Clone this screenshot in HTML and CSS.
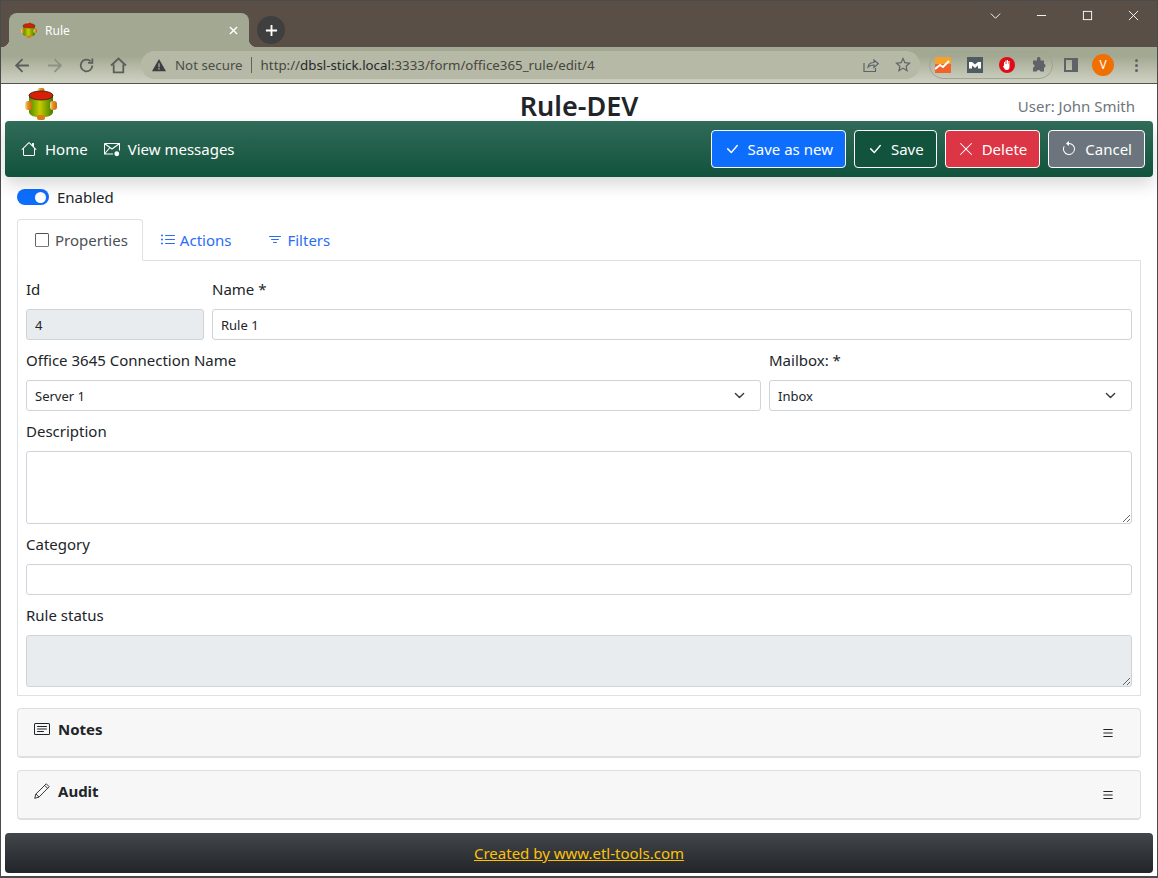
FILE: index.html
```html
<!DOCTYPE html>
<html>
<head>
  <title>Rule</title>
  <link rel="stylesheet" href="styles.css">
</head>
<body>
<svg class="defs" width="0" height="0">
  <defs>
    <linearGradient id="g-body" x1="0" x2="1" y1="0" y2="0">
      <stop offset="0" stop-color="#4f8a00"/>
      <stop offset=".45" stop-color="#c4cc00"/>
      <stop offset="1" stop-color="#3f7a00"/>
    </linearGradient>
    <linearGradient id="g-knob" x1="0" x2="1" y1="0" y2="0">
      <stop offset="0" stop-color="#f3dfa0"/>
      <stop offset=".45" stop-color="#e58a1c"/>
      <stop offset="1" stop-color="#c96a10"/>
    </linearGradient>
  </defs>
  <symbol id="i-house" viewBox="0 0 16 16"><path d="M8.707 1.5a1 1 0 0 0-1.414 0L.646 8.146a.5.5 0 0 0 .708.708L2 8.207V13.5A1.5 1.5 0 0 0 3.5 15h9a1.5 1.5 0 0 0 1.5-1.5V8.207l.646.647a.5.5 0 0 0 .708-.708L13 5.793V2.5a.5.5 0 0 0-.5-.5h-1a.5.5 0 0 0-.5.5v1.293L8.707 1.5ZM13 7.207V13.5a.5.5 0 0 1-.5.5h-9a.5.5 0 0 1-.5-.5V7.207l5-5 5 5Z"/></symbol>
  <symbol id="i-check" viewBox="0 0 16 16"><path d="M12.736 3.97a.733.733 0 0 1 1.047 0c.286.289.29.756.01 1.05L7.88 12.01a.733.733 0 0 1-1.065.02L3.217 8.384a.757.757 0 0 1 0-1.06.733.733 0 0 1 1.047 0l3.052 3.093 5.4-6.425a.247.247 0 0 1 .02-.022Z"/></symbol>
  <symbol id="i-x" viewBox="0 0 16 16"><path d="M2.146 2.854a.5.5 0 1 1 .708-.708L8 7.293l5.146-5.147a.5.5 0 0 1 .708.708L8.707 8l5.147 5.146a.5.5 0 0 1-.708.708L8 8.707l-5.146 5.147a.5.5 0 0 1-.708-.708L7.293 8 2.146 2.854Z"/></symbol>
  <symbol id="i-undo" viewBox="0 0 16 16"><path d="M8 3a5 5 0 1 1-4.546 2.914.5.5 0 0 0-.908-.417A6 6 0 1 0 8 2v1z"/><path d="M8 4.466V.534a.25.25 0 0 0-.41-.192L5.23 2.308a.25.25 0 0 0 0 .384l2.36 1.966A.25.25 0 0 0 8 4.466z"/></symbol>
  <symbol id="i-list-ul" viewBox="0 0 16 16"><path d="M5 11.5a.5.5 0 0 1 .5-.5h9a.5.5 0 0 1 0 1h-9a.5.5 0 0 1-.5-.5zm0-4a.5.5 0 0 1 .5-.5h9a.5.5 0 0 1 0 1h-9a.5.5 0 0 1-.5-.5zm0-4a.5.5 0 0 1 .5-.5h9a.5.5 0 0 1 0 1h-9a.5.5 0 0 1-.5-.5zm-3 1a1 1 0 1 0 0-2 1 1 0 0 0 0 2zm0 4a1 1 0 1 0 0-2 1 1 0 0 0 0 2zm0 4a1 1 0 1 0 0-2 1 1 0 0 0 0 2z"/></symbol>
  <symbol id="i-filter" viewBox="0 0 16 16"><path d="M6 10.5a.5.5 0 0 1 .5-.5h3a.5.5 0 0 1 0 1h-3a.5.5 0 0 1-.5-.5zm-2-3a.5.5 0 0 1 .5-.5h7a.5.5 0 0 1 0 1h-7a.5.5 0 0 1-.5-.5zm-2-3a.5.5 0 0 1 .5-.5h11a.5.5 0 0 1 0 1h-11a.5.5 0 0 1-.5-.5z"/></symbol>
  <symbol id="i-square" viewBox="0 0 16 16"><path d="M14 1a1 1 0 0 1 1 1v12a1 1 0 0 1-1 1H2a1 1 0 0 1-1-1V2a1 1 0 0 1 1-1h12zM2 0a2 2 0 0 0-2 2v12a2 2 0 0 0 2 2h12a2 2 0 0 0 2-2V2a2 2 0 0 0-2-2H2z"/></symbol>
  <symbol id="i-card" viewBox="0 0 16 16"><path d="M14.5 3a.5.5 0 0 1 .5.5v9a.5.5 0 0 1-.5.5h-13a.5.5 0 0 1-.5-.5v-9a.5.5 0 0 1 .5-.5h13zm-13-1A1.5 1.5 0 0 0 0 3.5v9A1.5 1.5 0 0 0 1.5 14h13a1.5 1.5 0 0 0 1.5-1.5v-9A1.5 1.5 0 0 0 14.5 2h-13z"/><path d="M3 5.5a.5.5 0 0 1 .5-.5h9a.5.5 0 0 1 0 1h-9a.5.5 0 0 1-.5-.5zM3 8a.5.5 0 0 1 .5-.5h9a.5.5 0 0 1 0 1h-9A.5.5 0 0 1 3 8zm0 2.5a.5.5 0 0 1 .5-.5h6a.5.5 0 0 1 0 1h-6a.5.5 0 0 1-.5-.5z"/></symbol>
  <symbol id="i-menu" viewBox="0 0 16 16"><path d="M2.5 12a.5.5 0 0 1 .5-.5h10a.5.5 0 0 1 0 1H3a.5.5 0 0 1-.5-.5zm0-4a.5.5 0 0 1 .5-.5h10a.5.5 0 0 1 0 1H3a.5.5 0 0 1-.5-.5zm0-4a.5.5 0 0 1 .5-.5h10a.5.5 0 0 1 0 1H3a.5.5 0 0 1-.5-.5z"/></symbol>
  <symbol id="i-logo" viewBox="0 0 32 32">
    <rect x="12.500" y="0" width="7" height="6" rx="2" fill="url(#g-knob)"/>
    <path d="M4 7v17c0 3 5 5.500 12 5.500S28 27 28 24V7z" fill="url(#g-body)"/>
    <ellipse cx="16" cy="7.500" rx="12" ry="4.500" fill="#d81e05" stroke="#222" stroke-width=".8"/>
    <rect x="0" y="13" width="7" height="9" rx="3" fill="url(#g-knob)"/>
    <rect x="25" y="13" width="7" height="9" rx="3" fill="url(#g-knob)"/>
    <rect x="12" y="27" width="8" height="5" rx="2" fill="#e0791e"/>
  </symbol>
</svg>

<div class="browser">
  <div class="tabstrip">
    <div class="tab">
      <svg class="favicon"><use href="#i-logo"/></svg>
      <span class="tab-title">Rule</span>
      <svg class="tab-close" viewBox="0 0 10 10"><path d="M1 1l8 8M9 1l-8 8"/></svg>
    </div>
    <div class="newtab"><svg viewBox="0 0 14 14"><path d="M7 1v12M1 7h12"/></svg></div>
    <div class="winctl">
      <svg viewBox="0 0 12 12"><path d="M1 4l5 5 5-5"/></svg>
      <svg viewBox="0 0 12 12"><path d="M1 6h10"/></svg>
      <svg viewBox="0 0 12 12"><rect x="1.5" y="1.5" width="9" height="9"/></svg>
      <svg viewBox="0 0 12 12"><path d="M1 1l10 10M11 1l-10 10"/></svg>
    </div>
  </div>
  <div class="toolbar">
    <svg class="tool" viewBox="0 0 16 16"><path d="M14 8H2.5M8 2L2 8l6 6"/></svg>
    <svg class="tool tool-off" viewBox="0 0 16 16"><path d="M2 8h11.5M8 2l6 6-6 6"/></svg>
    <svg class="tool" viewBox="0 0 16 16"><path d="M13.5 8A5.5 5.5 0 1 1 11.8 4M13.5 1.5V5.5H9.5"/></svg>
    <svg class="tool" viewBox="0 0 16 16"><path d="M1 8l7-6.5L15 8M3.5 7v7.5h9V7"/></svg>
    <div class="omnibox">
      <svg class="warn" viewBox="0 0 16 16"><path d="M8 1l8 14H0z" fill="#3c4043"/><path d="M7.3 6h1.4v4.5H7.3zM7.3 11.5h1.4V13H7.3z" fill="#b5b9a6"/></svg>
      <span class="not-secure">Not secure</span>
      <span class="url">http://<b>dbsl-stick.local</b>:3333/form/office365_rule/edit/4</span>
      <svg class="omni-icon" viewBox="0 0 16 16"><path d="M1 6v8.5h11.5V11M5 10c.5-3 3-4.500 6-4.500V3l4.200 3.700-4.200 3.700V8C8.500 8 6.500 8.500 5 10z"/></svg>
      <svg class="omni-icon" viewBox="0 0 16 16"><path d="M8 1.500l1.900 4.200 4.600.5-3.400 3.100.9 4.500L8 11.100l-4 2.700.9-4.500L1.500 6.200l4.600-.5z"/></svg>
    </div>
    <div class="extensions">
      <svg class="ext" viewBox="0 0 16 16"><rect width="16" height="16" fill="#f0632a"/><rect width="16" height="7" fill="#f7a12a"/><path d="M0 12l5-4 3 2 6-6" fill="none" stroke="#fff" stroke-width="2"/></svg>
      <svg class="ext" viewBox="0 0 16 16"><rect width="16" height="16" fill="#4f5b60"/><path d="M2 11.500V5h3L8 7.500 11 5h3v6.500h-3V8.500L8 11 5 8.500v3z" fill="#fff"/></svg>
      <svg class="ext" viewBox="0 0 16 16"><circle cx="8" cy="8" r="8" fill="#e00b16"/><path d="M5 8V5h1v2h.4V3.500h1.100V7h.4V3h1.100v4h.4V4h1.100v6c0 2-1 3-2.800 3S5.500 12 4 9.500l.6-.5z" fill="#fff"/></svg>
      <svg class="ext" viewBox="0 0 16 16"><path fill="#5f6368" d="M6 1.500a1.800 1.800 0 0 1 3.500 0V3.500H13v3.300a2 2 0 0 1 0 3.900V14.500H9.500a2 2 0 0 0-3.800 0H2V10.800a2 2 0 0 0 0-3.900V3.500h4z"/></svg>
    </div>
    <svg class="sidepanel" viewBox="0 0 14 14"><path fill-rule="evenodd" fill="#5f6368" d="M0 0h14v14H0zM2 2v10h6V2z"/></svg>
    <div class="avatar">V</div>
    <div class="kebab"><i></i><i></i><i></i></div>
  </div>

  <div class="page">
    <header class="top">
      <div class="top-side"><svg class="logo"><use href="#i-logo"/></svg></div>
      <div class="app-title">Rule-DEV</div>
      <div class="top-side user">User: John Smith</div>
    </header>

    <nav class="navbar">
      <a class="nav-link"><svg class="ico"><use href="#i-house"/></svg>Home</a>
      <a class="nav-link">
        <svg class="ico-mail" viewBox="0 0 16 16"><path d="M.5 2.500h15v7M.5 2.500v10.500h8.500M.5 2.500l7.500 5.500 7.500-5.500M.5 13l5-6"/><circle class="mail-dot" cx="12.800" cy="12.800" r="3"/></svg>View messages</a>
      <div class="nav-actions">
        <button class="btn btn-blue"><svg class="ico"><use href="#i-check"/></svg>Save as new</button>
        <button class="btn btn-green"><svg class="ico"><use href="#i-check"/></svg>Save</button>
        <button class="btn btn-red"><svg class="ico"><use href="#i-x"/></svg>Delete</button>
        <button class="btn btn-grey"><svg class="ico"><use href="#i-undo"/></svg>Cancel</button>
      </div>
    </nav>

    <main class="content">
      <div class="switch-row"><span class="switch"><span class="knob"></span></span>Enabled</div>

      <div class="tabs">
        <a class="tab-link active"><svg class="ico-sm"><use href="#i-square"/></svg>Properties</a>
        <a class="tab-link"><svg class="ico-tab"><use href="#i-list-ul"/></svg>Actions</a>
        <a class="tab-link"><svg class="ico-tab"><use href="#i-filter"/></svg>Filters</a>
      </div>

      <section class="panel">
        <div class="row">
          <div class="field col-id"><label>Id</label><input class="ctl" type="text" value="4" disabled></div>
          <div class="field grow"><label>Name *</label><input class="ctl" type="text" value="Rule 1"></div>
        </div>
        <div class="row">
          <div class="field grow"><label>Office 3645 Connection Name</label><select class="ctl"><option>Server 1</option></select></div>
          <div class="field col-mail"><label>Mailbox: *</label><select class="ctl"><option>Inbox</option></select></div>
        </div>
        <div class="field"><label>Description</label><textarea class="ctl area-desc"></textarea></div>
        <div class="field"><label>Category</label><input class="ctl" type="text"></div>
        <div class="field"><label>Rule status</label><textarea class="ctl area-status" disabled></textarea></div>
      </section>

      <section class="card">
        <svg class="ico-card"><use href="#i-card"/></svg><span class="card-title">Notes</span>
        <svg class="ico-menu"><use href="#i-menu"/></svg>
      </section>
      <section class="card">
        <svg class="ico-pen" viewBox="0 0 16 16"><path d="M.7 15.300l1.200-4.300L12.300.8l2.900 2.900L5 14.100zM1.900 11l3.100 3.100M10.700 2.400l2.900 2.900"/></svg><span class="card-title">Audit</span>
        <svg class="ico-menu"><use href="#i-menu"/></svg>
      </section>
    </main>

    <footer class="footer"><a>Created by www.etl-tools.com</a></footer>
  </div>
</div>
</body>
</html>
```

FILE: styles.css
```css
* {
  box-sizing: border-box;
}
html, body {
  margin: 0;
  height: 100%;
}
body {
  font-family: "Noto Sans", "Open Sans", sans-serif;
  font-size: 15px;
  color: #212529;
  background: #fff;
  overflow: hidden;
}
.defs {
  display: block;
  height: 0;
}
.browser {
  height: 878px;
  border: 1px solid #4b4b4b;
  border-bottom-width: 2px;
  display: flex;
  flex-direction: column;
}

/* browser chrome */
.tabstrip {
  height: 46px;
  background: #5a4f47;
  display: flex;
  align-items: flex-end;
  padding-left: 8px;
}
.tab {
  width: 240px;
  height: 34px;
  background: #a3a892;
  border-radius: 8px 8px 0 0;
  display: flex;
  align-items: center;
  padding: 0 5px 0 12px;
  color: #fff;
  font-size: 12px;
  position: relative;
}
.tab::before,
.tab::after {
  content: "";
  position: absolute;
  bottom: 0;
  width: 8px;
  height: 8px;
}
.tab::before {
  left: -8px;
  background: radial-gradient(circle at 0 0, transparent 8px, #a3a892 8.5px);
}
.tab::after {
  right: -8px;
  background: radial-gradient(circle at 100% 0, transparent 8px, #a3a892 8.5px);
}
.favicon {
  width: 16px;
  height: 16px;
  margin-right: 8px;
}
.tab-title {
  flex: 1;
}
.tab-close {
  width: 9px;
  height: 9px;
  margin-right: 6px;
  stroke: #fff;
  stroke-width: 1.5;
}
.newtab {
  width: 28px;
  height: 28px;
  margin: 0 0 3px 8px;
  border-radius: 50%;
  background: #3f3f3f;
  display: flex;
  align-items: center;
  justify-content: center;
}
.newtab svg {
  width: 13px;
  height: 13px;
  stroke: #fff;
  stroke-width: 2;
}
.winctl {
  margin-left: auto;
  align-self: flex-start;
  display: flex;
  gap: 35px;
  padding: 9px 18px 0 0;
}
.winctl svg {
  width: 11px;
  height: 11px;
  fill: none;
  stroke: #fff;
  stroke-width: 1;
}
.toolbar {
  height: 37px;
  background: linear-gradient(#a3a892 25%, #cdd0c0 95%);
  border-bottom: 1px solid #55554f;
  display: flex;
  align-items: center;
  padding-left: 13px;
}
.tool {
  width: 17px;
  height: 17px;
  margin-right: 15px;
  fill: none;
  stroke: #5b5e5c;
  stroke-width: 1.7;
}
.tool-off {
  stroke: #8e9283;
}
.omnibox {
  width: 779px;
  height: 28px;
  margin-left: -1px;
  background: #b5b9a6;
  border-radius: 14px;
  display: flex;
  align-items: center;
  padding-left: 11px;
  font-size: 13.3px;
  color: #4b4d49;
}
.warn {
  width: 14px;
  height: 14px;
  margin-right: 9px;
}
.not-secure {
  padding-right: 8px;
  margin-right: 9px;
  border-right: 1px solid #5f6158;
  line-height: 16px;
}
.url {
  flex: 1;
  color: #45473f;
  white-space: nowrap;
}
.url b {
  font-weight: 400;
  color: #26282a;
}
.omni-icon {
  width: 16px;
  height: 16px;
  margin-right: 16px;
  fill: none;
  stroke: #5f6368;
  stroke-width: 1.2;
}
.omni-icon:last-child {
  margin-right: 9px;
}
.extensions {
  margin-left: 9px;
  width: 124px;
  height: 28px;
  border: 1px solid #a0a492;
  border-radius: 14px;
  display: flex;
  align-items: center;
  justify-content: space-between;
  padding: 0 0 0 5px;
}
.ext {
  width: 16px;
  height: 16px;
  margin-right: 16px;
}
.ext:last-child {
  margin-right: 5px;
}
.sidepanel {
  width: 14px;
  height: 14px;
  margin-left: 11px;
}
.avatar {
  width: 22px;
  height: 22px;
  margin-left: 14px;
  border-radius: 50%;
  background: #f06f00;
  color: #fff;
  font-size: 12px;
  text-align: center;
  line-height: 22px;
}
.kebab {
  margin-left: 21px;
  display: flex;
  flex-direction: column;
  gap: 2px;
}
.kebab i {
  width: 3px;
  height: 3px;
  border-radius: 50%;
  background: #5f6368;
}

/* page */
.page {
  flex: 1;
  display: flex;
  flex-direction: column;
  min-height: 0;
}
.top {
  height: 37px;
  display: flex;
  align-items: center;
  padding: 0 22px;
}
.top-side {
  flex: 1;
  align-self: flex-start;
}
.logo {
  width: 32px;
  height: 32px;
  margin: 4px 0 0 2px;
}
.app-title {
  font-size: 27px;
  font-weight: 600;
  line-height: 37px;
  padding-top: 6px;
}
.user {
  text-align: right;
  color: #6c757d;
  padding-top: 12px;
  line-height: 20px;
}
.navbar {
  height: 56px;
  margin: 0 4px;
  padding: 0 8px 0 16px;
  background: linear-gradient(#316b59, #11533c);
  border-radius: 4px;
  box-shadow: 0 8px 16px rgba(0, 0, 0, .15);
  display: flex;
  align-items: center;
  color: #fff;
  position: relative;
}
.nav-link {
  display: flex;
  align-items: center;
  margin-right: 16px;
}
.ico {
  width: 16px;
  height: 16px;
  margin-right: 8px;
  fill: #fff;
}
.ico-mail {
  width: 16px;
  height: 16px;
  margin-right: 8px;
  fill: none;
  stroke: #fff;
  stroke-width: 1.1;
}
.mail-dot {
  fill: #fff;
  stroke: #1f5d49;
}
.nav-actions {
  margin-left: auto;
  display: flex;
  gap: 8px;
}
.btn {
  height: 38px;
  padding: 0 12px;
  display: flex;
  align-items: center;
  font: inherit;
  color: #fff;
  border: 1px solid #fff;
  border-radius: 4px;
}
.btn .ico {
  margin-right: 8px;
}
.btn-blue {
  background: #0d6efd;
}
.btn-green {
  background: #11533c;
}
.btn-red {
  background: #dc3545;
}
.btn-grey {
  background: #6c757d;
}
.content {
  flex: 1;
  padding: 0 16px;
}
.switch-row {
  height: 42px;
  display: flex;
  align-items: center;
  padding-bottom: 2px;
}
.switch {
  width: 32px;
  height: 16px;
  margin-right: 8px;
  background: #0d6efd;
  border-radius: 8px;
  display: flex;
  justify-content: flex-end;
  align-items: center;
  padding-right: 3px;
}
.knob {
  width: 11px;
  height: 11px;
  border-radius: 50%;
  background: #fff;
}
.tabs {
  display: flex;
  height: 42px;
  border-bottom: 1px solid #dee2e6;
}
.tab-link {
  display: flex;
  align-items: center;
  height: 42px;
  padding: 0 16px;
  color: #2a6cf8;
  border: 1px solid transparent;
  border-radius: 4px 4px 0 0;
}
.tab-link:last-child {
  margin-left: 2px;
}
.tab-link.active {
  color: #495057;
  background: #fff;
  border-color: #dee2e6 #dee2e6 #fff;
  padding: 0 14px 0 17px;
}
.ico-sm {
  width: 14px;
  height: 14px;
  margin-right: 6px;
  fill: currentColor;
}
.ico-tab {
  width: 16px;
  height: 16px;
  margin-right: 4px;
  fill: currentColor;
}
.panel {
  height: 435px;
  border: 1px solid #dee2e6;
  border-top: 0;
  padding: 18px 8px 0;
}
.row {
  display: flex;
  gap: 8px;
}
.field {
  margin-bottom: 10px;
}
.field label {
  display: block;
  line-height: 20px;
  margin-bottom: 10px;
}
.grow {
  flex: 1;
}
.col-id {
  width: 178px;
}
.col-mail {
  width: 363px;
}
.ctl {
  display: block;
  width: 100%;
  height: 31px;
  padding: 1px 8px 0;
  font-family: inherit;
  font-size: 13px;
  color: #212529;
  background-color: #fff;
  border: 1px solid #ced4da;
  border-radius: 3px;
}
.ctl:disabled {
  background-color: #e9ecef;
  opacity: 1;
}
select.ctl {
  appearance: none;
  background-image: url("data:image/svg+xml,%3csvg xmlns='http://www.w3.org/2000/svg' viewBox='0 0 16 16'%3e%3cpath fill='none' stroke='%23343a40' stroke-linecap='round' stroke-linejoin='round' stroke-width='2' d='M2 5l6 6 6-6'/%3e%3c/svg%3e");
  background-repeat: no-repeat;
  background-position: right 14px center;
  background-size: 13px 11px;
}
.area-desc {
  height: 73px;
  padding-top: 6px;
}
.area-status {
  height: 52px;
}
.card {
  height: 50px;
  margin-top: 12px;
  background: #f7f7f7;
  border: 1px solid #dfdfdf;
  border-bottom-width: 2px;
  border-radius: 4px;
  display: flex;
  align-items: flex-start;
  padding: 10px 25px 0 16px;
}
.ico-card {
  width: 16px;
  height: 16px;
  margin: 2px 8px 0 0;
  fill: #212529;
}
.ico-pen {
  width: 16px;
  height: 16px;
  margin: 2px 8px 0 0;
  fill: none;
  stroke: #212529;
  stroke-width: .9;
}
.card-title {
  font-weight: 700;
  line-height: 20px;
}
.ico-menu {
  width: 14px;
  height: 14px;
  margin: 7px 0 0 auto;
  fill: #212529;
}
.footer {
  height: 40px;
  margin: 13px 4px 3px;
  background: linear-gradient(#43474b, #212529);
  border-radius: 4px;
  display: flex;
  align-items: center;
  justify-content: center;
}
.footer a {
  color: #ffc107;
  text-decoration: underline;
}
```
